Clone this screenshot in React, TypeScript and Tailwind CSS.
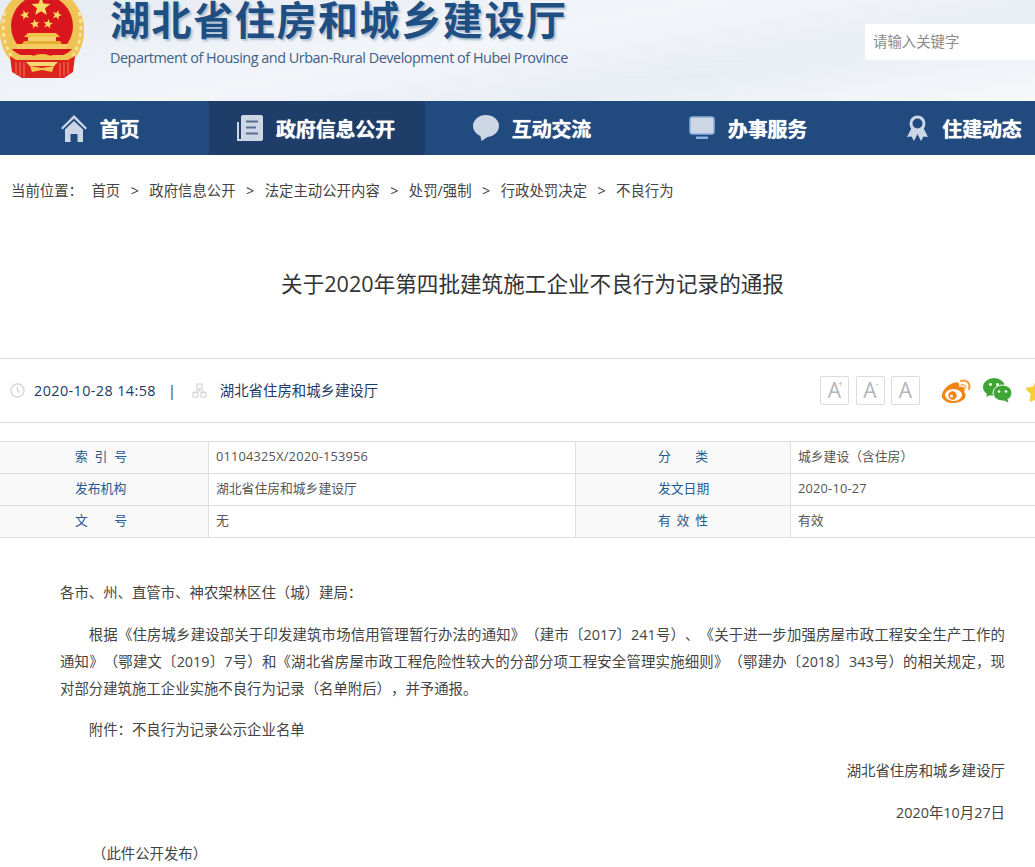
import React from "react";
import { FaStar } from "react-icons/fa";

const font = "[font-family:'Open_Sans','Noto_Sans_CJK_SC',sans-serif] [text-spacing-trim:space-all]";

function Emblem() {
  const star = (cx: number, cy: number, r: number, rot = 0) => {
    const pts: string[] = [];
    for (let i = 0; i < 10; i++) {
      const a = -Math.PI / 2 + rot + (i * Math.PI) / 5;
      const q = i % 2 ? r * 0.42 : r;
      pts.push(`${(cx + q * Math.cos(a)).toFixed(2)},${(cy + q * Math.sin(a)).toFixed(2)}`);
    }
    return <polygon points={pts.join(" ")} fill="#f8dc62" />;
  };
  return (
    <svg width="86" height="82" viewBox="0 0 86 82" className="shrink-0">
      <path d="M14 -2 C-3 14 -4 38 7 56 L14 64 H70 L78 54 C88 36 86 12 70 -2 Z" fill="#efc457" />
      <path d="M5 12 C1 28 3 44 13 58 M79 12 C83 28 81 44 71 58" stroke="#f8e39a" strokeWidth="3" fill="none" strokeDasharray="4 3" />
      <circle cx="42" cy="26" r="31" fill="#d9161d" />
      {star(41, 7, 10)}
      {star(25, 15, 5, -0.3)}
      {star(57, 15, 5, 0.3)}
      {star(35, 24, 5, -0.15)}
      {star(48, 24, 5, 0.15)}
      <path d="M28 33 H56 L60 37 H24 Z" fill="#f0c248" />
      <rect x="28" y="37" width="28" height="4" fill="#f5d06a" />
      <path d="M24 41 H60 L62 44 H22 Z" fill="#e7ae36" />
      <rect x="17" y="44" width="50" height="5" fill="#f4cd62" />
      <path d="M12 49 H72 L68 55 H16 Z" fill="#d9161d" />
      <path d="M28 59 Q42 49 56 59 Z" fill="#f0c248" />
      <path d="M12 52 C18 58 28 60 42 60 C56 60 66 58 72 52" stroke="#efc457" strokeWidth="4" fill="none" />
      <path d="M10 56 L16 60 H68 L75 56 L73 72 L64 78 H22 L12 72 Z" fill="#dc241f" />
      <path d="M16 62 V74 M20 62 V76 M24 63 V77 M60 63 V77 M64 62 V76 M68 62 V74" stroke="#f07a5a" strokeWidth="1" />
      <path d="M30 66 L42 68 L54 66 L52 72 L42 70 L32 72 Z" fill="#f3c64f" />
      <path d="M26 62 H58 L54 66 H30 Z" fill="#f7d873" />
    </svg>
  );
}

function HomeIcon() {
  return (
    <svg width="26" height="27" viewBox="0 0 26 27" fill="#ccd6e5" className="shrink-0">
      <path d="M13 0 L26 13 L24.5 14.5 L13 3.5 L1.5 14.5 L0 13 Z" />
      <path d="M13 6 L22 14.5 V27 H16.5 V19 H9.5 V27 H4 V14.5 Z" />
    </svg>
  );
}
function DocIcon() {
  return (
    <svg width="26" height="26" viewBox="0 0 26 26" className="shrink-0">
      <path d="M1 7 V25 H5" stroke="#ccd6e5" strokeWidth="2" fill="none" />
      <rect x="4" y="0" width="22" height="26" rx="2" fill="#ccd6e5" />
      <path d="M9 6.5 H21 M9 12.5 H19 M9 18.5 H21" stroke="#5a6f90" strokeWidth="1.8" />
    </svg>
  );
}
function ChatIcon() {
  return (
    <svg width="26" height="26" viewBox="0 0 26 26" fill="#ccd6e5" className="shrink-0">
      <ellipse cx="13" cy="11" rx="13" ry="11" />
      <path d="M7 19 L8.5 26 L16 21 Z" />
    </svg>
  );
}
function MonitorIcon() {
  return (
    <svg width="26" height="24" viewBox="0 0 26 24" className="shrink-0">
      <rect x="1" y="1" width="24" height="17" rx="2.5" fill="#ccd6e5" stroke="#8fb0dc" strokeWidth="1.5" />
      <rect x="7" y="20.5" width="12" height="2.5" fill="#8fb0dc" />
    </svg>
  );
}
function AwardIcon() {
  return (
    <svg width="23" height="26" viewBox="0 0 21 26" className="shrink-0">
      <path d="M5 12 L0 22 L4.5 21.5 L7 26 L10.5 19 L14 26 L16.5 21.5 L21 22 L16 12 Z" fill="#ccd6e5" />
      <circle cx="10.5" cy="8.5" r="6.5" fill="#214a7f" stroke="#ccd6e5" strokeWidth="3" />
    </svg>
  );
}

function WeiboIcon() {
  return (
    <svg width="31" height="26" viewBox="0 0 31 26" className="shrink-0" fill="none">
      <path d="M12 5 C18 3 19 6 18 9 C23 8 25 11 23 14 C26 16 25 21 20 23 C13 27 3 25 1 19 C0 14 6 7 12 5 Z" fill="#f18412" />
      <ellipse cx="12.5" cy="17" rx="8.5" ry="6" fill="#fff" />
      <circle cx="11.5" cy="17.5" r="4.2" fill="#f18412" />
      <circle cx="10.5" cy="18" r="1.5" fill="#fff" />
      <path d="M20 3 C25 1 30 5 28 11" stroke="#f59a30" strokeWidth="2" strokeLinecap="round" />
      <path d="M20 7 C23 6 25 8 24.5 10" stroke="#f9b25c" strokeWidth="1.6" strokeLinecap="round" />
    </svg>
  );
}

function WechatIcon() {
  return (
    <svg width="29" height="25" viewBox="0 0 29 25" className="shrink-0">
      <ellipse cx="11" cy="9" rx="11" ry="9" fill="#3fa535" />
      <path d="M4 14 L3.5 19 L9 16 Z" fill="#3fa535" />
      <circle cx="7.5" cy="6.5" r="1.4" fill="#fff" />
      <circle cx="14.5" cy="6.5" r="1.4" fill="#fff" />
      <ellipse cx="19.5" cy="15" rx="9.5" ry="8" fill="#3fa535" stroke="#fff" strokeWidth="1" />
      <path d="M24 20 L25.5 24.5 L20 22 Z" fill="#3fa535" />
      <circle cx="16" cy="13.5" r="1.3" fill="#fff" />
      <circle cx="23" cy="13.5" r="1.3" fill="#fff" />
    </svg>
  );
}

function NavItem({ icon, text, active }: { icon: React.ReactNode; text: string; active?: boolean }) {
  return (
    <div className={`w-[216px] shrink-0 h-full flex items-center justify-center gap-[13px] pr-[2px] ${active ? "bg-[#1e3d69]" : ""}`}>
      {icon}
      <span className="text-[20px] pt-[3px] font-bold text-white tracking-[-0.15px] whitespace-nowrap [text-shadow:0_0_1px_#ffffff]">{text}</span>
    </div>
  );
}

function Crumb({ text, last }: { text: string; last?: boolean }) {
  return (
    <>
      <span>{text}</span>
      {!last && <span className="mx-[10.4px]">&gt;</span>}
    </>
  );
}

function FontBtn({ children, sup }: { children: string; sup?: string }) {
  return (
    <div className="w-[29px] h-[29px] border border-[#dcdcdc] rounded-[2px] flex items-center justify-center text-[#b4b4b4] text-[21px] leading-none relative">
      {children}
      {sup && <span className="absolute top-[2px] right-[5px] text-[9px] leading-none">{sup}</span>}
    </div>
  );
}

function Label({ a, b, c, narrow }: { a: string; b?: string; c?: string; narrow?: boolean }) {
  return (
    <span className={`inline-flex justify-between ${narrow ? "w-[50px]" : "w-[52px]"}`}>
      <span>{a}</span>
      {b && <span>{b}</span>}
      {c && <span>{c}</span>}
    </span>
  );
}

function Num({ children }: { children: React.ReactNode }) {
  return <span className="tracking-[0.2px]">{children}</span>;
}

function Row({ l1, v1, l2, v2 }: { l1: React.ReactNode; v1: React.ReactNode; l2: React.ReactNode; v2: React.ReactNode }) {
  return (
    <div className="grid grid-cols-[209px_367px_215px_1fr] h-[32px] border-b border-[#dedede] text-[12.8px] leading-[29px]">
      <div className="bg-[#f9f9f9] border-r border-[#dedede] pl-[75px] text-[#275a8e]">{l1}</div>
      <div className="border-r border-[#dedede] pl-[7px] text-[#555]">{v1}</div>
      <div className="bg-[#f9f9f9] border-r border-[#dedede] pl-[82px] text-[#275a8e]">{l2}</div>
      <div className="pl-[7px] text-[#555]">{v2}</div>
    </div>
  );
}

export default function App() {
  return (
    <div className={`w-[1035px] h-[867px] overflow-hidden bg-white ${font}`}>
      <header className="relative h-[101px] flex justify-between overflow-hidden bg-[linear-gradient(170deg,#e6ebf2_0%,#f3f5f9_45%,#e9eef4_70%,#f7f9fb_100%)]">
        <div className="flex">
          <Emblem />
          <div className="ml-[24px] mt-[-9px]">
            <div className="text-[40px] leading-[58px] font-bold tracking-[1.6px] text-[#1f4e82] whitespace-nowrap [text-shadow:2px_2px_2px_rgba(31,78,130,0.3)]">
              湖北省住房和城乡建设厅
            </div>
            <div className="text-[14.4px] leading-[20px] mt-[-1px] text-[#3d6088] tracking-[-0.47px] whitespace-nowrap">
              Department of Housing and Urban-Rural Development of Hubei Province
            </div>
          </div>
        </div>
        <svg width="140" height="20" viewBox="0 0 140 20" className="absolute left-[615px] top-[60px]" fill="none" stroke="#e8ebf0" strokeWidth="1.2">
          <path d="M2 17 H90 Q110 17 105 10 Q100 4 50 7 Q40 2 50 1 H135" />
        </svg>
        <div className="w-[170px] h-[36px] mt-[24px] bg-white rounded-l-[2px] flex items-center pl-[8px] text-[14.4px] text-[#8a8a8a]">
          请输入关键字
        </div>
      </header>

      <nav className="h-[54px] bg-[#214a7f] flex overflow-hidden">
        <div className="flex h-full -ml-[7px]">
          <NavItem icon={<HomeIcon />} text="首页" />
          <NavItem icon={<DocIcon />} text="政府信息公开" active />
          <NavItem icon={<ChatIcon />} text="互动交流" />
          <NavItem icon={<MonitorIcon />} text="办事服务" />
          <NavItem icon={<AwardIcon />} text="住建动态" />
        </div>
      </nav>

      <div className="h-[72px] pl-[11px] flex items-center text-[14.4px] text-[#444] whitespace-nowrap">
        <span className="mr-[8.5px]">当前位置：</span>
        <Crumb text="首页" />
        <Crumb text="政府信息公开" />
        <Crumb text="法定主动公开内容" />
        <Crumb text="处罚/强制" />
        <Crumb text="行政处罚决定" />
        <Crumb text="不良行为" last />
      </div>

      <h1 className="h-[131px] pb-[16px] pl-[30px] flex items-center justify-center text-[21.6px] text-[#333] whitespace-nowrap">
        关于2020年第四批建筑施工企业不良行为记录的通报
      </h1>

      <div className="h-[65px] border-y border-[#dedede] flex items-center pl-[10px] overflow-hidden text-[14.4px] text-[#1d3a66] whitespace-nowrap">
        <svg width="15" height="15" viewBox="0 0 15 15" fill="none" stroke="#cfcfcf" strokeWidth="1.2" className="shrink-0">
          <circle cx="7.5" cy="7.5" r="6.6" />
          <path d="M7.5 3.5 V8 L10.5 9.5" />
        </svg>
        <span className="ml-[9px] tracking-[0.4px]">2020-10-28 14:58</span>
        <span className="ml-[12px] text-[#333]">|</span>
        <svg width="15" height="15" viewBox="0 0 15 15" fill="none" stroke="#d4d4d4" strokeWidth="1.2" className="ml-[16px] shrink-0">
          <rect x="5" y="1" width="5" height="5" />
          <rect x="1" y="9.5" width="5" height="4.5" />
          <rect x="9" y="9.5" width="5" height="4.5" />
          <path d="M7.5 6 V8 M3.5 9.5 V8 H11.5 V9.5" />
        </svg>
        <span className="ml-[13px]">湖北省住房和城乡建设厅</span>
        <div className="ml-auto flex items-center shrink-0 -mr-[14px]">
          <div className="flex gap-[6.5px] pb-[1px]">
            <FontBtn sup="+">A</FontBtn>
            <FontBtn sup="-">A</FontBtn>
            <FontBtn>A</FontBtn>
          </div>
          <div className="ml-[21px]"><WeiboIcon /></div>
          <div className="ml-[11px]"><WechatIcon /></div>
          <FaStar className="ml-[13px] text-[#f7ce3a]" size={24} />
        </div>
      </div>

      <div className="mt-[18px] border-t border-[#dedede]">
        <Row l1={<Label a="索" b="引" c="号" />} v1={<Num>01104325X/2020-153956</Num>} l2={<Label a="分" b="类" narrow />} v2="城乡建设（含住房）" />
        <Row l1="发布机构" v1="湖北省住房和城乡建设厅" l2="发文日期" v2={<Num>2020-10-27</Num>} />
        <Row l1={<Label a="文" b="号" />} v1="无" l2={<Label a="有" b="效" c="性" narrow />} v2="有效" />
      </div>

      <article className="pl-[60px] pr-[30px] pt-[41px] text-[14.4px] leading-[27px] text-[#444]">
        <p className="mb-[15px]">各市、州、直管市、神农架林区住（城）建局：</p>
        <p className="mb-[13.8px] indent-[28.8px] text-justify">
          根据《住房城乡建设部关于印发建筑市场信用管理暂行办法的通知》（建市〔2017〕241号）、《关于进一步加强房屋市政工程安全生产工作的通知》（鄂建文〔2019〕7号）和《湖北省房屋市政工程危险性较大的分部分项工程安全管理实施细则》（鄂建办〔2018〕343号）的相关规定，现对部分建筑施工企业实施不良行为记录（名单附后），并予通报。
        </p>
        <p className="mb-[14.4px] indent-[28.8px]">附件：不良行为记录公示企业名单</p>
        <p className="mb-[14.4px] text-right">湖北省住房和城乡建设厅</p>
        <p className="mb-[14.4px] text-right">2020年10月27日</p>
        <p className="indent-[32px]">（此件公开发布）</p>
      </article>
    </div>
  );
}
